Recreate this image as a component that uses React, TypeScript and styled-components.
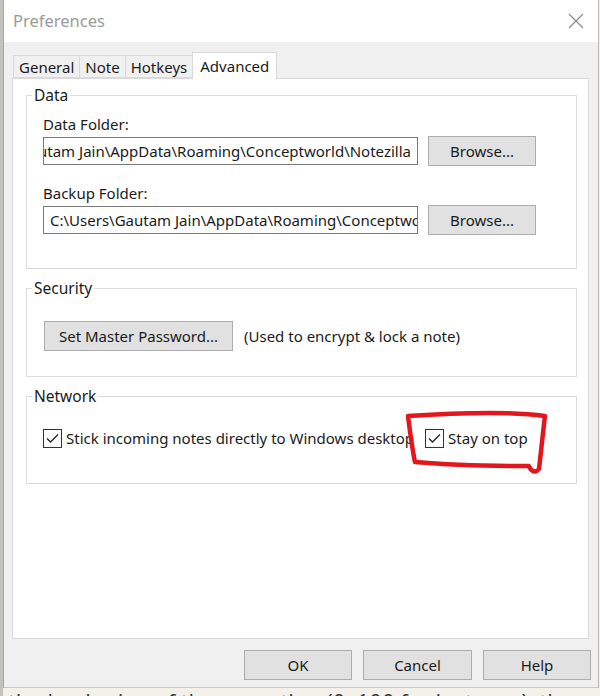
import React from "react";
import styled, { createGlobalStyle } from "styled-components";

const Global = createGlobalStyle`
  html, body { margin: 0; padding: 0; }
  body { background: #f3f1ea; font-family: "Noto Sans", "Open Sans", sans-serif; }
`;

const Screen = styled.div`
  position: relative;
  width: 600px;
  height: 696px;
  overflow: hidden;
  background: #f3f1ea;
  border-left: 3px solid #c4c2bc;
  box-sizing: border-box;
`;

const Dialog = styled.div`
  width: 596px;
  height: 688px;
  box-sizing: border-box;
  border-right: 1px solid #b8b8b8;
  border-bottom: 1px solid #c8c8c8;
  border-left: 1px solid #a8a8a8;
  background: #f0f0f0;
  display: flex;
  flex-direction: column;
  color: #1b1b1b;
  font-size: 15px;
`;

const TitleBar = styled.div`
  height: 42px;
  flex: none;
  background: #ffffff;
  display: flex;
  align-items: center;
  justify-content: space-between;
  padding: 0 14px 0 9px;
`;

const Title = styled.div`
  font-size: 16.5px;
  color: #9b9b9b;
  margin-top: -2px;
`;

const Body = styled.div`
  flex: 1;
  display: flex;
  flex-direction: column;
  padding: 10px 9px 9px 8px;
`;

const TabStrip = styled.div`
  display: flex;
  align-items: flex-end;
  height: 26px;
  padding-left: 2px;
  position: relative;
  z-index: 1;
`;

const Tab = styled.div<{ $active?: boolean }>`
  box-sizing: border-box;
  height: ${(p) => (p.$active ? "27px" : "23px")};
  margin-bottom: ${(p) => (p.$active ? "-1px" : "0")};
  padding: 0 ${(p) => (p.$active ? "7px" : "5px")};
  background: ${(p) => (p.$active ? "#ffffff" : "#f0f0f0")};
  border: 1px solid #d9d9d9;
  border-bottom: ${(p) => (p.$active ? "none" : "1px solid #d9d9d9")};
  margin-left: -1px;
  display: flex;
  align-items: center;
  line-height: 20px;
`;

const Panel = styled.div`
  height: 561px;
  box-sizing: border-box;
  background: #ffffff;
  border: 1px solid #d9d9d9;
  padding: 6px 11px 0 13px;
  display: flex;
  flex-direction: column;
  gap: 9px;
`;

const Group = styled.fieldset`
  margin: 0;
  border: 1px solid #dcdcdc;
  padding: 0;
  min-width: 0;
`;

const GroupBody = styled.div<{ $pad: string }>`
  padding: ${(p) => p.$pad};
`;

const Legend = styled.legend`
  padding: 0 2px;
  margin-left: 5px;
  line-height: 20px;
  font-size: 15.5px;
`;

const FieldLabel = styled.div`
  line-height: 20px;
  margin-bottom: 2px;
`;

const FieldRow = styled.div<{ $gapBottom?: number }>`
  display: flex;
  align-items: center;
  height: 30px;
  gap: 10px;
  margin-bottom: ${(p) => p.$gapBottom ?? 0}px;
`;

const PathBox = styled.div<{ $alignEnd?: boolean }>`
  box-sizing: border-box;
  width: 375px;
  height: 28px;
  border: 1px solid #7a7a7a;
  background: #fff;
  display: flex;
  align-items: center;
  justify-content: ${(p) => (p.$alignEnd ? "flex-end" : "flex-start")};
  overflow: hidden;
  white-space: nowrap;
  padding: 0 6px;
`;

const PathText = styled.span`
  flex: none;
`;

const Button = styled.div<{ $w: number }>`
  box-sizing: border-box;
  width: ${(p) => p.$w}px;
  height: 30px;
  background: #e1e1e1;
  border: 1px solid #adadad;
  display: flex;
  align-items: center;
  justify-content: center;
  flex: none;
`;

const InlineRow = styled.div`
  display: flex;
  align-items: center;
  gap: 11px;
`;

const CheckRow = styled.div`
  display: flex;
  align-items: center;
  height: 20px;
`;

const CheckItem = styled.label<{ $gapAfter?: number }>`
  display: flex;
  align-items: center;
  gap: 4px;
  margin-right: ${(p) => p.$gapAfter ?? 0}px;
  white-space: nowrap;
`;

const Box = styled.span`
  box-sizing: border-box;
  width: 19px;
  height: 19px;
  border: 1px solid #333333;
  background: #fff;
  display: flex;
  align-items: center;
  justify-content: center;
`;

const Footer = styled.div`
  display: flex;
  justify-content: flex-end;
  gap: 11px;
  margin-top: 11px;
  margin-right: -2px;
`;

const Behind = styled.div`
  font-size: 22px;
  line-height: 30px;
  color: #3a3a3a;
  padding-left: 5px;
  margin-top: -2px;
  white-space: nowrap;
  font-family: "Open Sans", "Noto Sans", sans-serif;
`;

const Annotation = styled.svg`
  position: absolute;
  left: -3px;
  top: 0;
  pointer-events: none;
`;

const Check = () => (
  <Box>
    <svg width="13" height="11" viewBox="0 0 13 11">
      <polyline points="1,5.5 4.5,9 12,1.5" fill="none" stroke="#222" strokeWidth="1.3" />
    </svg>
  </Box>
);

const CloseIcon = () => (
  <svg width="16" height="16" viewBox="0 0 16 16">
    <path d="M1 1 L15 15 M15 1 L1 15" stroke="#8a8a8a" strokeWidth="1.2" fill="none" />
  </svg>
);

export default function App() {
  return (
    <>
      <Global />
      <Screen>
        <Dialog>
          <TitleBar>
            <Title>Preferences</Title>
            <CloseIcon />
          </TitleBar>
          <Body>
            <TabStrip>
              <Tab>General</Tab>
              <Tab>Note</Tab>
              <Tab>Hotkeys</Tab>
              <Tab $active>Advanced</Tab>
            </TabStrip>
            <Panel>
              <Group>
                <Legend>Data</Legend>
                <GroupBody $pad="9px 12px 33px 16px">
                  <FieldLabel>Data Folder:</FieldLabel>
                  <FieldRow $gapBottom={17}>
                    <PathBox $alignEnd>
                      <PathText>Gautam Jain\AppData\Roaming\Conceptworld\Notezilla</PathText>
                    </PathBox>
                    <Button $w={108}>Browse...</Button>
                  </FieldRow>
                  <FieldLabel>Backup Folder:</FieldLabel>
                  <FieldRow>
                    <PathBox>
                      <PathText>C:\Users\Gautam Jain\AppData\Roaming\Conceptworld\Notezilla</PathText>
                    </PathBox>
                    <Button $w={108}>Browse...</Button>
                  </FieldRow>
                </GroupBody>
              </Group>
              <Group>
                <Legend>Security</Legend>
                <GroupBody $pad="23px 12px 25px 17px">
                  <InlineRow>
                    <Button $w={189}>Set Master Password...</Button>
                    <span>(Used to encrypt &amp; lock a note)</span>
                  </InlineRow>
                </GroupBody>
              </Group>
              <Group>
                <Legend>Network</Legend>
                <GroupBody $pad="22px 12px 35px 16px">
                  <CheckRow>
                    <CheckItem $gapAfter={11}>
                      <Check />
                      Stick incoming notes directly to Windows desktop
                    </CheckItem>
                    <CheckItem>
                      <Check />
                      Stay on top
                    </CheckItem>
                  </CheckRow>
                </GroupBody>
              </Group>
            </Panel>
            <Footer>
              <Button $w={108}>OK</Button>
              <Button $w={109}>Cancel</Button>
              <Button $w={108}>Help</Button>
            </Footer>
          </Body>
        </Dialog>
        <Behind>the beginning of the execution (0, 100 for instance), the ...</Behind>
        <Annotation width="600" height="696" viewBox="0 0 600 696">
          <path
            d="M408 416 C 470 412, 515 412, 545 416 C 543 432, 541 452, 539 469 C 536 473, 531 472, 529 466 C 490 466, 450 465, 415 462 C 412 448, 410 432, 408 416 Z"
            fill="none"
            stroke="#e2161c"
            strokeWidth="4.5"
            strokeLinejoin="round"
          />
        </Annotation>
      </Screen>
    </>
  );
}
